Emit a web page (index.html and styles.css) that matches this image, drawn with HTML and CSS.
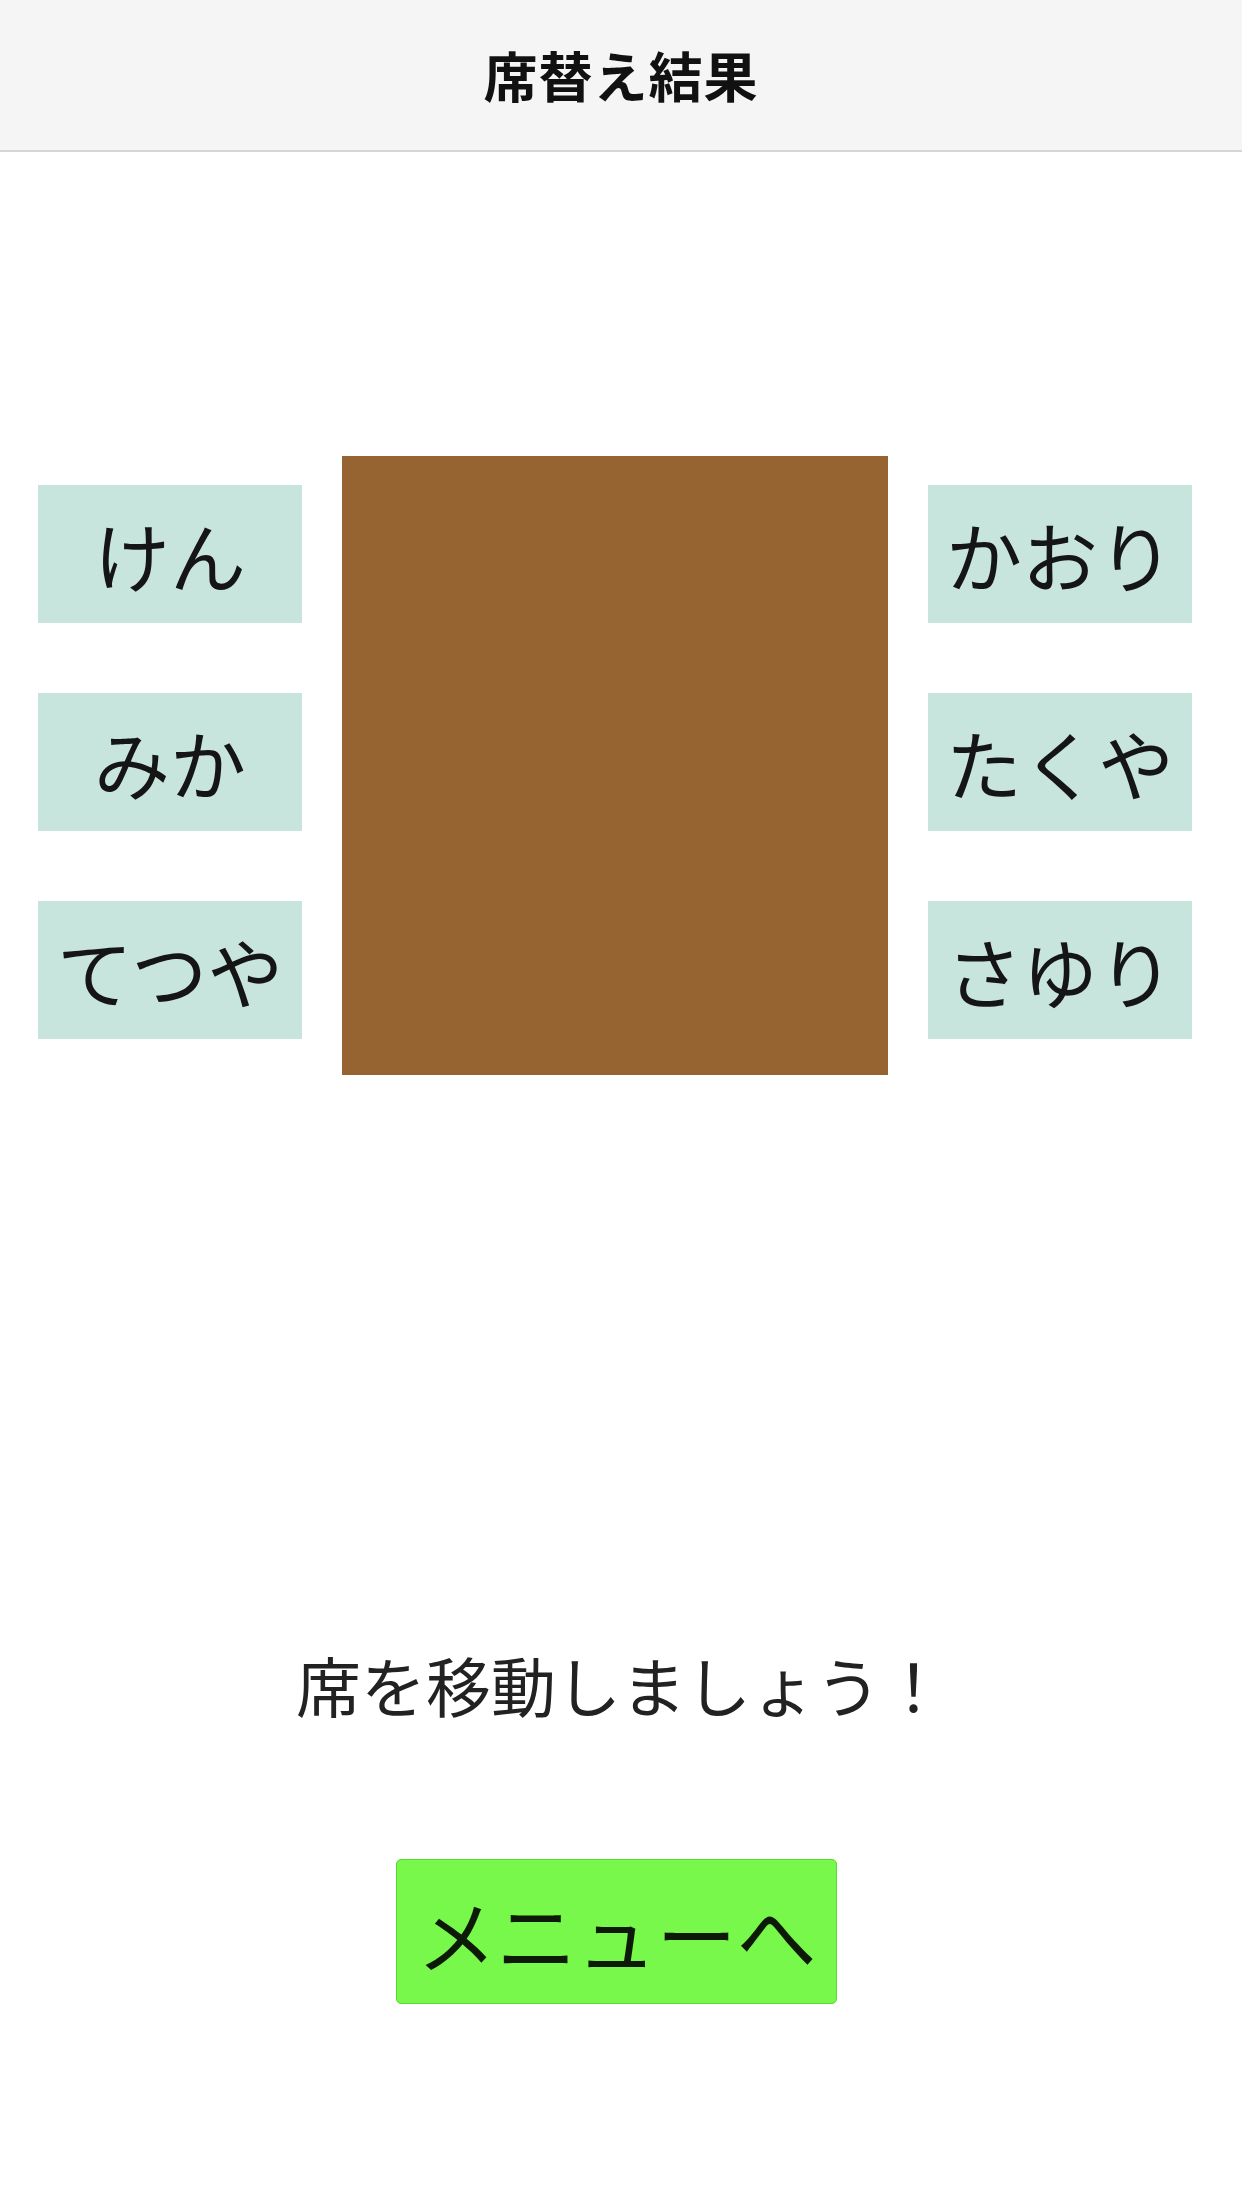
FILE: index.html
```html
<!DOCTYPE html>
<html lang="ja">
<head>
<meta charset="utf-8">
<title>席替え結果</title>
<link rel="stylesheet" href="styles.css">
</head>
<body>
<header class="nav-bar">
  <h1 class="nav-title">席替え結果</h1>
</header>
<main class="content">
  <section class="seating">
    <div class="seat-column">
      <div class="seat">けん</div>
      <div class="seat">みか</div>
      <div class="seat">てつや</div>
    </div>
    <div class="table"></div>
    <div class="seat-column">
      <div class="seat">かおり</div>
      <div class="seat">たくや</div>
      <div class="seat">さゆり</div>
    </div>
  </section>
  <p class="message">席を移動しましょう！</p>
  <div class="actions">
    <button class="menu-button" type="button">メニューへ</button>
  </div>
</main>
</body>
</html>
```
FILE: styles.css
```css
html, body {
  margin: 0;
  padding: 0;
  background: #ffffff;
}

body {
  width: 1242px;
  height: 2208px;
  overflow: hidden;
  font-family: "Noto Sans CJK JP", "Noto Sans", sans-serif;
  color: #1a1a1a;
}

.nav-bar {
  height: 150px;
  background: #f6f5f5;
  border-bottom: 2px solid #d6d6d6;
  display: flex;
  align-items: center;
  justify-content: center;
}

.nav-title {
  margin: 0;
  font-size: 54px;
  font-weight: 700;
  line-height: 1;
  color: #111111;
  letter-spacing: 1px;
}

.content {
  display: flex;
  flex-direction: column;
  align-items: center;
}

.seating {
  align-self: stretch;
  display: flex;
  align-items: flex-start;
  gap: 40px;
  padding-left: 38px;
  margin-top: 304px;
}

.seat-column {
  display: flex;
  flex-direction: column;
  gap: 70px;
  padding-top: 29px;
}

.seat {
  width: 264px;
  height: 138px;
  background: #c7e5dd;
  display: flex;
  align-items: center;
  justify-content: center;
  font-size: 76px;
  line-height: 1;
  color: #151515;
  white-space: nowrap;
}

.table {
  width: 546px;
  height: 619px;
  background: #956431;
}

.message {
  margin: 569px 0 0;
  font-size: 65px;
  line-height: 80px;
  color: #222222;
  letter-spacing: 0;
}

.actions {
  margin-top: 135px;
  margin-right: 9px;
}

.menu-button {
  width: 441px;
  height: 145px;
  background: #77f84b;
  border: 1px solid #5fd63a;
  border-radius: 5px;
  font-family: "Noto Sans CJK JP", "Noto Sans", sans-serif;
  font-size: 80px;
  line-height: 1;
  color: #0d1a08;
  padding: 0;
  display: flex;
  align-items: center;
  justify-content: center;
  white-space: nowrap;
}
```
